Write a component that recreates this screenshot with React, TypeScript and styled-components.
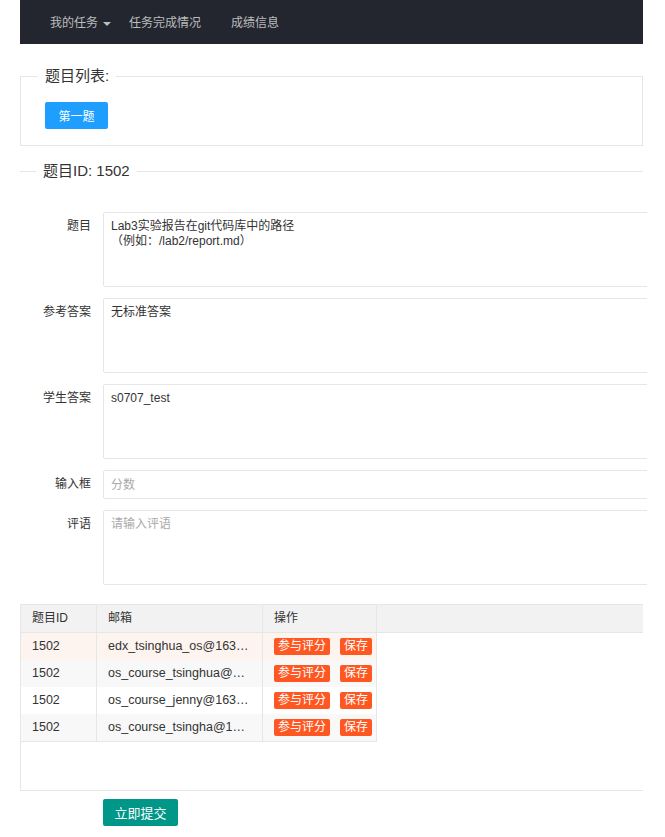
import React from "react"
import styled, { createGlobalStyle } from "styled-components"

const GlobalStyle = createGlobalStyle`
  html, body {
    margin: 0;
    padding: 0;
    overflow-x: hidden;
    background: #fff;
  }
  body {
    font-family: "Liberation Sans", "Noto Sans CJK SC", sans-serif;
    font-size: 12px;
    color: #333;
  }
  * {
    box-sizing: border-box;
  }
`

const rows = [
  { id: "1502", email: "edx_tsinghua_os@163.com" },
  { id: "1502", email: "os_course_tsinghua@163.com" },
  { id: "1502", email: "os_course_jenny@163.com" },
  { id: "1502", email: "os_course_tsingha@163.com" },
]

const App = () => {
  return (
    <Page>
      <GlobalStyle />
      <NavBar>
        <NavItem $gap={18}>
          我的任务
          <Caret />
        </NavItem>
        <NavItem $gap={30}>任务完成情况</NavItem>
        <NavItem $gap={0}>成绩信息</NavItem>
      </NavBar>

      <BoxField>
        <BoxLegend>题目列表:</BoxLegend>
        <BlueButton>第一题</BlueButton>
      </BoxField>

      <TitleField>
        <TitleLegend>题目ID: 1502</TitleLegend>
      </TitleField>

      <Form>
        <FormRow>
          <Label>题目</Label>
          <FieldClip>
            <TextArea
              readOnly
              value={"Lab3实验报告在git代码库中的路径\n（例如：/lab2/report.md）"}
            />
          </FieldClip>
        </FormRow>
        <FormRow>
          <Label>参考答案</Label>
          <FieldClip>
            <TextArea readOnly value="无标准答案" />
          </FieldClip>
        </FormRow>
        <FormRow>
          <Label>学生答案</Label>
          <FieldClip>
            <TextArea readOnly value="s0707_test" />
          </FieldClip>
        </FormRow>
        <FormRow>
          <Label $top={6}>输入框</Label>
          <FieldClip>
            <Input placeholder="分数" />
          </FieldClip>
        </FormRow>
        <FormRow>
          <Label>评语</Label>
          <FieldClip>
            <TextArea placeholder="请输入评语" />
          </FieldClip>
        </FormRow>
      </Form>

      <TableWrap>
        <HeadRow>
          <HeadCell $w={76}>题目ID</HeadCell>
          <HeadCell $w={166}>邮箱</HeadCell>
          <HeadCell $w={114}>操作</HeadCell>
          <HeadFiller />
        </HeadRow>
        <Body>
          {rows.map((row, i) => (
            <BodyRow key={i} $bg={i === 0 ? "#fdf3ef" : i % 2 === 1 ? "#f8f8f8" : "#fff"}>
              <Cell $w={76}>{row.id}</Cell>
              <Cell $w={166}>{row.email}</Cell>
              <ActionCell>
                <OrangeButton>参与评分</OrangeButton>
                <OrangeButton>保存</OrangeButton>
              </ActionCell>
            </BodyRow>
          ))}
        </Body>
      </TableWrap>

      <SubmitButton>立即提交</SubmitButton>
    </Page>
  )
}

const Page = styled.div`
  margin-left: 20px;
  width: 623px;
  padding-bottom: 10px;
`

const NavBar = styled.div`
  height: 44px;
  background: #23262e;
  display: flex;
  align-items: center;
  padding-left: 30px;
`

const NavItem = styled.div<{ $gap: number }>`
  display: flex;
  align-items: center;
  color: rgba(255, 255, 255, 0.7);
  font-size: 12px;
  margin-right: ${(p) => p.$gap}px;
  line-height: 44px;
  padding-top: 1px;
`

const Caret = styled.span`
  width: 0;
  height: 0;
  margin-left: 5px;
  margin-top: 2px;
  border-left: 4px solid transparent;
  border-right: 4px solid transparent;
  border-top: 4px solid rgba(255, 255, 255, 0.7);
`

const BoxField = styled.fieldset`
  margin: 22px 0 0;
  padding: 16px 24px 16px;
  border: 1px solid #e6e6e6;
  min-width: 0;
`

const BoxLegend = styled.legend`
  margin-left: -7px;
  padding: 0 7px;
  font-size: 15px;
  line-height: 20px;
  color: #333;
`

const TitleField = styled.fieldset`
  margin: 15px 0 0;
  padding: 0;
  border: none;
  border-top: 1px solid #e6e6e6;
  min-width: 0;
`

const TitleLegend = styled.legend`
  margin-left: 16px;
  padding: 0 7px;
  font-size: 15px;
  line-height: 20px;
  color: #333;
`

const BlueButton = styled.button`
  width: 63px;
  height: 27px;
  border: none;
  border-radius: 2px;
  background: #1e9fff;
  color: #fff;
  font-family: inherit;
  font-size: 12px;
  padding: 0;
`

const Form = styled.div`
  margin-top: 31px;
  width: 627px;
`

const FormRow = styled.div`
  display: flex;
  align-items: flex-start;
  margin-bottom: 11px;
`

const Label = styled.label<{ $top?: number }>`
  flex: 0 0 83px;
  padding: ${(p) => p.$top ?? 6}px 12px 0 0;
  text-align: right;
  font-size: 12px;
  line-height: 16px;
  color: #333;
`

const FieldClip = styled.div`
  flex: 1;
  min-width: 0;
  overflow: hidden;
  display: flex;
`

const TextArea = styled.textarea`
  display: block;
  flex: none;
  width: 700px;
  height: 75px;
  border: 1px solid #e6e6e6;
  border-radius: 2px;
  padding: 6px 7px;
  font-family: inherit;
  font-size: 12px;
  line-height: 15px;
  color: #333;
  resize: none;
  outline: none;

  &::placeholder {
    color: #aaa;
  }
`

const Input = styled.input`
  display: block;
  flex: none;
  width: 700px;
  height: 29px;
  border: 1px solid #e6e6e6;
  border-radius: 2px;
  padding: 0 7px;
  font-family: inherit;
  font-size: 12px;
  color: #333;
  outline: none;

  &::placeholder {
    color: #aaa;
  }
`

const TableWrap = styled.div`
  margin-top: 19px;
  height: 187px;
  border: 1px solid #e6e6e6;
  border-right: none;
`

const HeadRow = styled.div`
  display: flex;
  height: 28px;
  background: #f2f2f2;
  border-bottom: 1px solid #e6e6e6;
`

const HeadCell = styled.div<{ $w: number }>`
  flex: 0 0 ${(p) => p.$w}px;
  padding: 0 11px;
  line-height: 27px;
  border-right: 1px solid #e6e6e6;
  color: #333;
`

const HeadFiller = styled.div`
  flex: 1;
`

const Body = styled.div`
  width: 356px;
  border-right: 1px solid #e6e6e6;
  border-bottom: 1px solid #e6e6e6;
`

const BodyRow = styled.div<{ $bg: string }>`
  display: flex;
  height: 27px;
  background: ${(p) => p.$bg};
`

const Cell = styled.div<{ $w: number }>`
  flex: 0 0 ${(p) => p.$w}px;
  padding: 0 11px;
  border-right: 1px solid #e6e6e6;
  color: #333;
  font-size: 12.5px;
  line-height: 27px;
  white-space: nowrap;
  overflow: hidden;
  text-overflow: ellipsis;
`

const ActionCell = styled.div`
  flex: 1;
  display: flex;
  align-items: center;
  gap: 10px;
  padding-left: 11px;
`

const OrangeButton = styled.span`
  flex-shrink: 0;
  display: inline-block;
  height: 17px;
  line-height: 17px;
  padding: 0 4px;
  background: #ff5722;
  color: #fff;
  border-radius: 2px;
  font-size: 12px;
  white-space: nowrap;
`

const SubmitButton = styled.button`
  display: block;
  margin: 8px 0 0 83px;
  width: 75px;
  height: 27px;
  border: none;
  border-radius: 2px;
  background: #009688;
  color: #fff;
  font-family: inherit;
  font-size: 13px;
  padding: 0;
`

export default App
